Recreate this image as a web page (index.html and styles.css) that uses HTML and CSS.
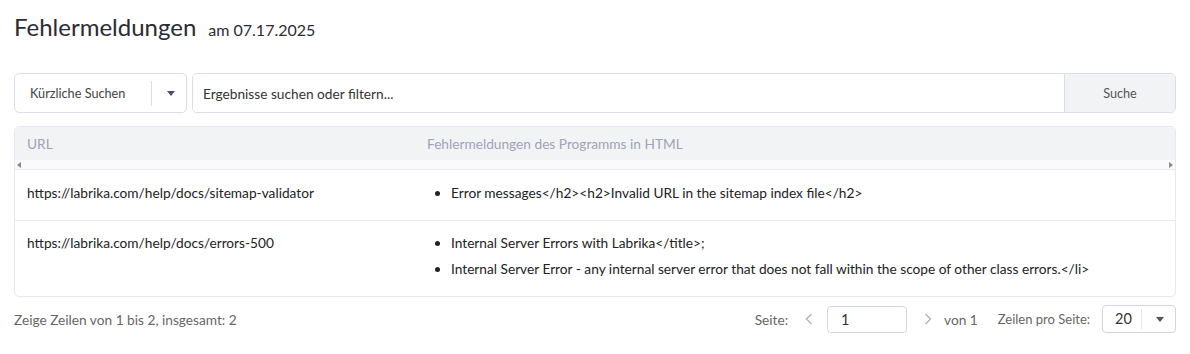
FILE: index.html
```html
<!DOCTYPE html>
<html lang="de">
<head>
  <meta charset="UTF-8" />
  <title>Fehlermeldungen</title>
  <link rel="stylesheet" href="styles.css">
</head>
<body>

<div class="page">
  <div class="title">
    <h1>Fehlermeldungen</h1>
    <span class="date">am 07.17.2025</span>
  </div>

  <div class="search-bar">
    <div class="recent">
      <span class="recent-label">Kürzliche Suchen</span>
      <span class="sep"></span>
      <span class="caret"></span>
    </div>
    <div class="search-box">
      <input type="text" placeholder="Ergebnisse suchen oder filtern...">
      <button class="search-btn">Suche</button>
    </div>
  </div>

  <div class="grid">
    <div class="grid-head">
      <div class="col-url">URL</div>
      <div class="col-msg">Fehlermeldungen des Programms in HTML</div>
    </div>
    <div class="scroller">
      <span class="arrow-left"></span>
      <span class="arrow-right"></span>
    </div>
    <div class="grid-row">
      <div class="col-url">https://labrika.com/help/docs/sitemap-validator</div>
      <div class="col-msg">
        <ul>
          <li>Error messages&lt;/h2&gt;&lt;h2&gt;Invalid URL in the sitemap index file&lt;/h2&gt;</li>
        </ul>
      </div>
    </div>
    <div class="grid-row">
      <div class="col-url">https://labrika.com/help/docs/errors-500</div>
      <div class="col-msg">
        <ul>
          <li>Internal Server Errors with Labrika&lt;/title&gt;;</li>
          <li>Internal Server Error - any internal server error that does not fall within the scope of other class errors.&lt;/li&gt;</li>
        </ul>
      </div>
    </div>
  </div>

  <div class="footer">
    <div class="summary">Zeige Zeilen von 1 bis 2, insgesamt: 2</div>
    <div class="pager">
      <span>Seite:</span>
      <svg class="nav prev" width="8" height="12" viewBox="0 0 8 12"><path d="M6.5 1 L1.5 6 L6.5 11" fill="none" stroke="#b4b6be" stroke-width="1.5"/></svg>
      <input class="page-input" type="text" value="1">
      <svg class="nav next" width="8" height="12" viewBox="0 0 8 12"><path d="M1.5 1 L6.5 6 L1.5 11" fill="none" stroke="#b4b6be" stroke-width="1.5"/></svg>
      <span>von 1</span>
      <span class="per-page">Zeilen pro Seite:</span>
      <div class="size-select">
        <span class="size-value">20</span>
        <span class="caret"></span>
      </div>
    </div>
  </div>
</div>

</body>
</html>
```

FILE: styles.css
```css
* {
  box-sizing: border-box;
  font-family: 'Lato', 'Open Sans', sans-serif;
}

body {
  margin: 0;
  background-color: #fff;
  color: #333;
}

.page {
  padding: 12px 14px 0 14px;
  width: 1190px;
}

.title {
  display: flex;
  align-items: baseline;
  gap: 12px;
  height: 46px;
}

.title h1 {
  margin: 0;
  font-size: 24px;
  font-weight: 400;
  color: #2b2b33;
}

.title .date {
  font-size: 16px;
  color: #2b2b33;
}

.search-bar {
  display: flex;
  gap: 5px;
  margin-top: 15px;
  height: 40px;
}

.recent {
  width: 173px;
  border: 1px solid #dcdde6;
  border-radius: 5px;
  display: flex;
  align-items: center;
  padding-left: 15px;
}

.recent-label {
  font-size: 12.7px;
  color: #444;
  width: 121px;
}

.sep {
  width: 1px;
  height: 25px;
  background-color: #dcdde6;
}

.caret {
  width: 0;
  height: 0;
  border-left: 4px solid transparent;
  border-right: 4px solid transparent;
  border-top: 5px solid #4a5068;
  margin-left: 15px;
}

.search-box {
  flex-grow: 1;
  display: flex;
  border: 1px solid #dcdde6;
  border-radius: 5px;
  overflow: hidden;
}

.search-box input {
  flex-grow: 1;
  border: none;
  outline: none;
  padding: 0 10px;
  font-size: 13.7px;
  color: #333;
}

.search-box input::placeholder {
  color: #333;
}

.search-btn {
  width: 111px;
  border: none;
  border-left: 1px solid #dcdde6;
  background-color: #f2f3f5;
  font-size: 12.7px;
  color: #555;
}

.grid {
  margin-top: 13px;
  border: 1px solid #e6e9f0;
  border-radius: 5px;
  overflow: hidden;
}

.grid-head,
.grid-row {
  display: flex;
}

.grid-head {
  background-color: #f2f3f5;
  height: 33px;
  align-items: center;
  font-size: 13.7px;
  color: #9ea3b8;
}

.col-url {
  width: 412px;
  padding-left: 12px;
}

.col-msg {
  flex-grow: 1;
}

.scroller {
  height: 10px;
  background-color: #fafafa;
  border-bottom: 1px solid #e6e9f0;
  display: flex;
  justify-content: space-between;
  align-items: center;
  padding: 0 2px;
}

.arrow-left {
  border-top: 3px solid transparent;
  border-bottom: 3px solid transparent;
  border-right: 4px solid #888;
}

.arrow-right {
  border-top: 3px solid transparent;
  border-bottom: 3px solid transparent;
  border-left: 4px solid #888;
}

.grid-row {
  font-size: 13.7px;
  color: #222;
  padding: 10px 0 14px 0;
  line-height: 26px;
}

.grid-row + .grid-row {
  border-top: 1px solid #e6e9f0;
  padding-top: 9px;
}

.grid-row ul {
  margin: 0;
  padding-left: 24px;
}

.footer {
  display: flex;
  justify-content: space-between;
  align-items: center;
  margin-top: 8px;
  height: 28px;
  font-size: 13.7px;
  color: #666;
}

.pager {
  display: flex;
  align-items: center;
}

.nav.prev {
  margin: 0 14px 0 17px;
}

.nav.next {
  margin: 0 12px 0 17px;
}

.page-input {
  width: 80px;
  height: 27px;
  border: 1px solid #d4d6de;
  border-radius: 4px;
  padding-left: 13px;
  font-size: 14.5px;
  color: #333;
}

.per-page {
  margin-left: 20px;
  margin-right: 12px;
  font-size: 13px;
}

.size-select {
  width: 74px;
  height: 28px;
  border: 1px solid #d4d6de;
  border-radius: 4px;
  display: flex;
  align-items: center;
  padding-left: 12px;
}

.size-value {
  font-size: 14.5px;
  color: #333;
  width: 27px;
  border-right: 1px solid #e6e6ea;
  line-height: 20px;
}

.size-select .caret {
  margin-left: 14px;
  border-top-color: #555;
}
```
